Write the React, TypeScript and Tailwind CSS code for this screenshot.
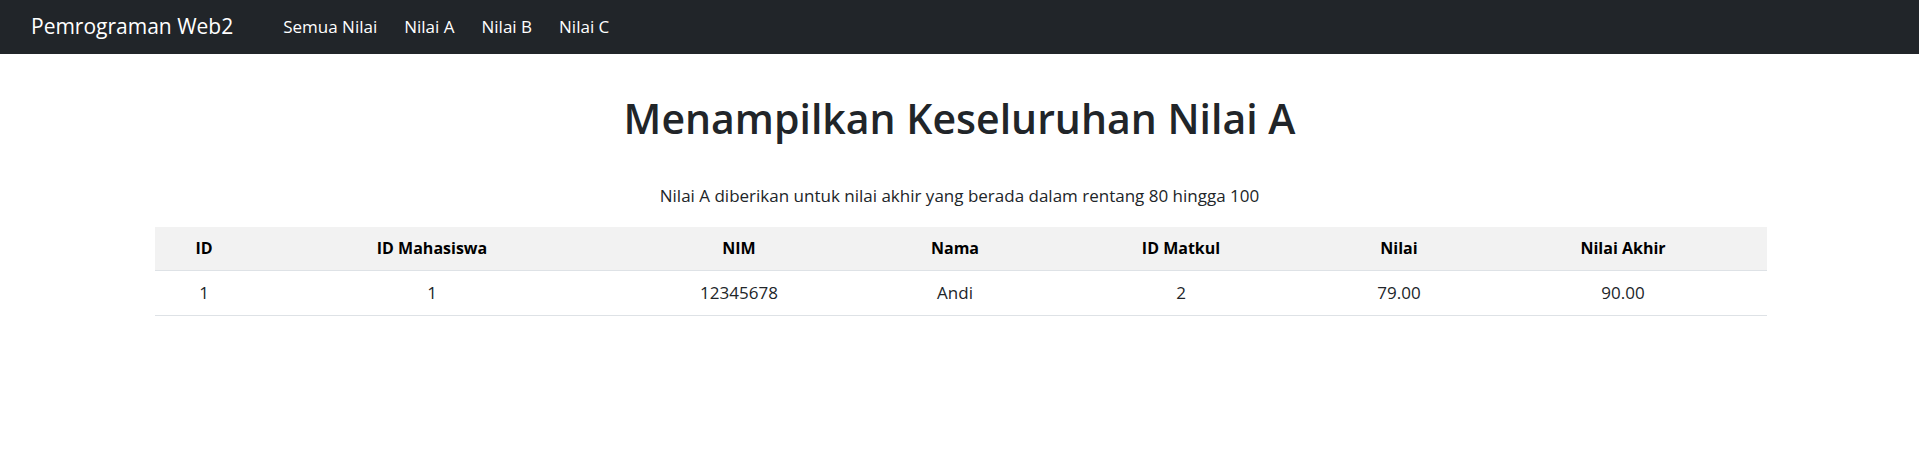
const rows = [
  { id: 1, idMhs: 1, nim: "12345678", nama: "Andi", idMatkul: 2, nilai: "79.00", akhir: "90.00" },
];

const cols = [
  { label: "ID", w: "w-[98px]" },
  { label: "ID Mahasiswa", w: "w-[358px]" },
  { label: "NIM", w: "w-[256px]" },
  { label: "Nama", w: "w-[176px]" },
  { label: "ID Matkul", w: "w-[276px]" },
  { label: "Nilai", w: "w-[160px]" },
  { label: "Nilai Akhir", w: "w-[288px]" },
];

export default function App() {
  return (
    <div className="min-h-[464px] bg-white font-['Open_Sans',sans-serif] text-[#212529]">
      <nav className="h-[54px] bg-[#212529] flex items-center px-[31px]">
        <a href="#" className="text-[21px] text-white mr-[50px]">
          Pemrograman Web2
        </a>
        <ul className="flex items-center gap-[27px] text-white text-[17px]">
          <li><a href="#">Semua Nilai</a></li>
          <li><a href="#">Nilai A</a></li>
          <li><a href="#">Nilai B</a></li>
          <li><a href="#">Nilai C</a></li>
        </ul>
      </nav>

      <main className="px-[155px]">
        <h1 className="text-[41px] font-semibold text-center mt-[40px] leading-[1.2]">
          Menampilkan Keseluruhan Nilai A
        </h1>
        <p className="text-center text-[17px] mt-[40px] mb-[18px]">
          Nilai A diberikan untuk nilai akhir yang berada dalam rentang 80 hingga 100
        </p>
        <table className="w-full border-collapse table-fixed">
          <thead>
            <tr className="bg-[#f2f2f2]">
              {cols.map((c) => (
                <th
                  key={c.label}
                  className={`${c.w} h-[44px] text-center font-bold text-black border-b border-[#dee2e6]`}
                >
                  {c.label}
                </th>
              ))}
            </tr>
          </thead>
          <tbody>
            {rows.map((r) => (
              <tr key={r.id} className="border-b border-[#dee2e6] text-[17px]">
                <td className="h-[45px] text-center">{r.id}</td>
                <td className="text-center">{r.idMhs}</td>
                <td className="text-center">{r.nim}</td>
                <td className="text-center">{r.nama}</td>
                <td className="text-center">{r.idMatkul}</td>
                <td className="text-center">{r.nilai}</td>
                <td className="text-center">{r.akhir}</td>
              </tr>
            ))}
          </tbody>
        </table>
      </main>
    </div>
  );
}
